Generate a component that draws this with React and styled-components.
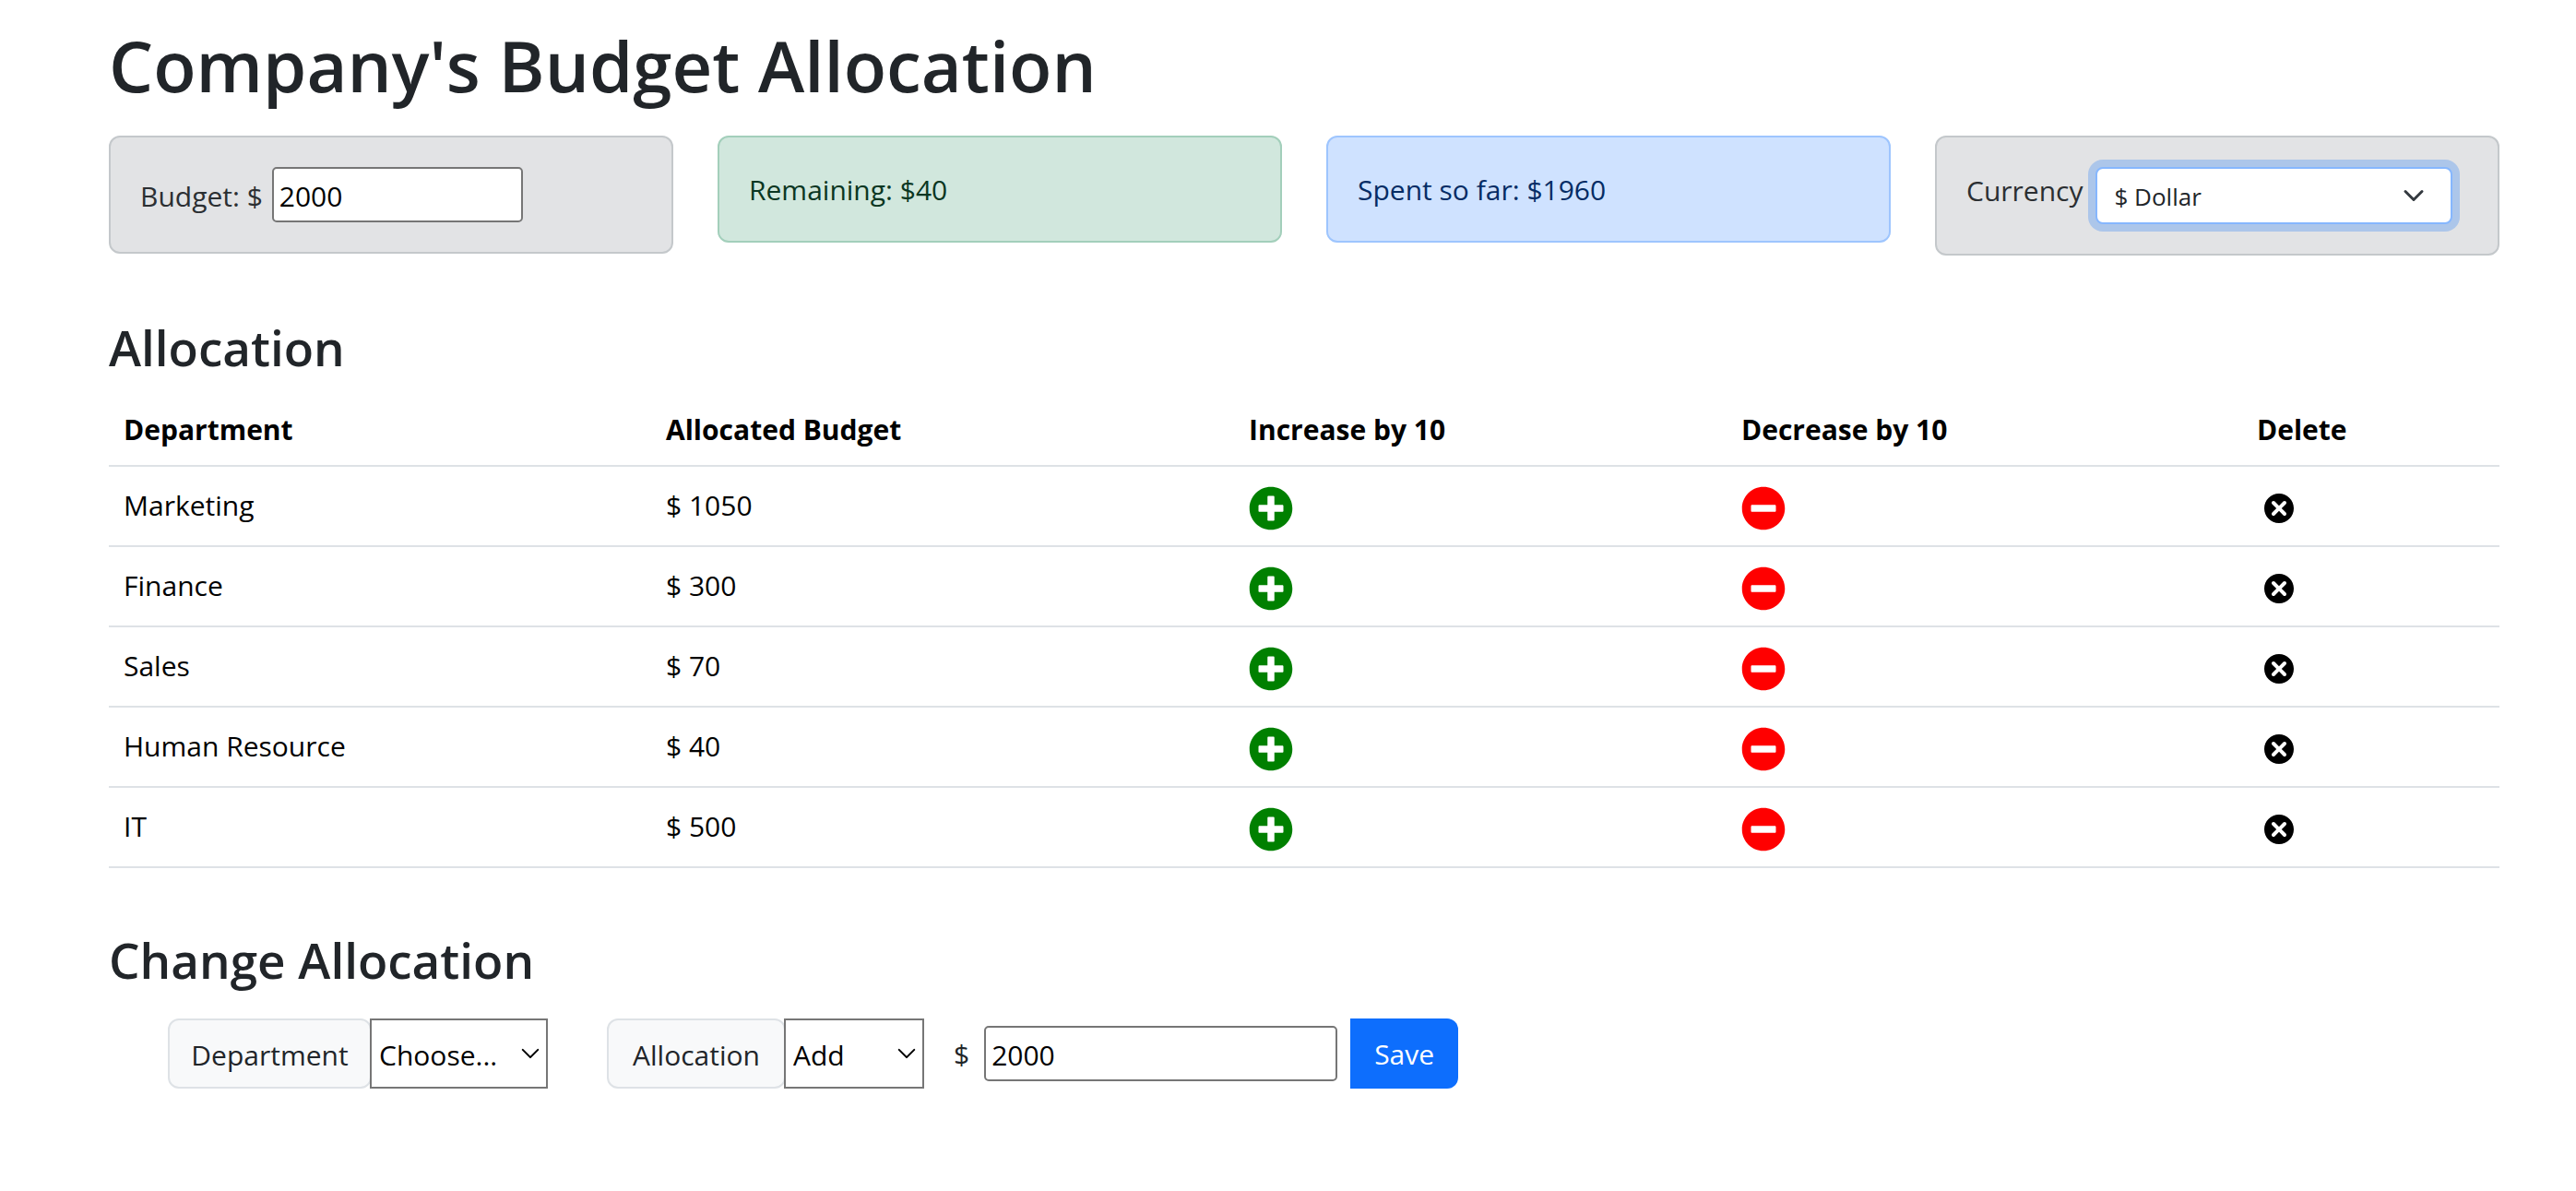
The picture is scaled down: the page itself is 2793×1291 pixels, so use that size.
import React, { useState } from "react";
import styled, { createGlobalStyle } from "styled-components";
import { FaPlusCircle, FaMinusCircle } from "react-icons/fa";
import { TiDelete } from "react-icons/ti";

const chevron = (color, width) =>
  `url("data:image/svg+xml,%3csvg xmlns='http://www.w3.org/2000/svg' viewBox='0 0 16 16'%3e%3cpath fill='none' stroke='%23${color}' stroke-linecap='round' stroke-linejoin='round' stroke-width='${width}' d='m2 5 6 6 6-6'/%3e%3c/svg%3e")`;

const GlobalStyle = createGlobalStyle`
  *, *::before, *::after { box-sizing: border-box; }
  body {
    margin: 0;
    background: #fff;
    color: #212529;
    font-family: "Open Sans", "Noto Sans", sans-serif;
    font-size: 30px;
    line-height: 48px;
  }
  input, select, button { font: inherit; margin: 0; }
`;

const Page = styled.main`
  padding: 23px 83px 0 118px;
`;

const Title = styled.h1`
  margin: 0 0 28px;
  font-size: 76px;
  font-weight: 600;
  line-height: 96px;
`;

const SectionTitle = styled.h2`
  margin: 66px 0 ${(p) => p.$space}px;
  font-size: 53px;
  font-weight: 600;
  line-height: 68px;
`;

const Summary = styled.section`
  display: grid;
  grid-template-columns: repeat(4, 1fr);
  gap: 48px;
  align-items: start;
`;

const tones = {
  secondary: { bg: "#e2e3e5", border: "#c4c8cb", text: "#2b2f32" },
  success: { bg: "#d1e7dd", border: "#a3cfbb", text: "#0a3622" },
  primary: { bg: "#cfe2ff", border: "#9ec5fe", text: "#052c65" },
};

const Card = styled.div`
  display: flex;
  align-items: ${(p) => p.$align || "flex-start"};
  gap: ${(p) => p.$gap || 0}px;
  padding: 32px;
  border: 2px solid ${(p) => tones[p.$tone].border};
  border-radius: 12px;
  background: ${(p) => tones[p.$tone].bg};
  color: ${(p) => tones[p.$tone].text};
`;

const CardText = styled.p`
  margin: 0;
  padding-top: 2px;
  line-height: 46px;
`;

const CardLabel = styled.label`
  padding-top: 2px;
  white-space: nowrap;
`;

const NumberInput = styled.input`
  width: ${(p) => p.$width}px;
  height: 60px;
  padding: 2px 6px 0;
  border: 2px solid #767676;
  border-radius: 5px;
  background: #fff;
  color: #000;
  appearance: textfield;
  &::-webkit-inner-spin-button { display: none; }
`;

const CurrencySelect = styled.select`
  flex: none;
  width: 71%;
  height: 62px;
  padding: 2px 72px 0 18px;
  border: 2px solid #86b7fe;
  border-radius: 8px;
  outline: 0;
  appearance: none;
  background: #fff ${chevron("343a40", 2)} no-repeat right 26px center / 28px 24px;
  box-shadow: 0 0 0 8px rgba(13, 110, 253, 0.25);
  color: #212529;
  font-size: 26px;
`;

const Table = styled.table`
  width: 100%;
  table-layout: fixed;
  border-spacing: 0;
  color: #000;
`;

const HeadCell = styled.th`
  height: 82px;
  padding: 18px 16px 14px;
  border-bottom: 2px solid #dee2e6;
  font-weight: 700;
  text-align: left;
`;

const Cell = styled.td`
  height: 87px;
  padding: ${(p) => (p.$icon ? "21px" : "18px")} 16px 0;
  border-bottom: 2px solid #dee2e6;
  vertical-align: top;
`;

const IconButton = styled.button`
  display: block;
  padding: 0;
  border: 0;
  background: none;
  color: ${(p) => p.$color};
  cursor: pointer;
  svg { display: block; width: 48px; height: 48px; }
`;

const Form = styled.form`
  display: flex;
  align-items: center;
  padding-left: 64px;
`;

const Group = styled.div`
  display: flex;
  margin-right: ${(p) => p.$space}px;
`;

const GroupLabel = styled.label`
  width: ${(p) => p.$width}px;
  height: 76px;
  padding: 14px 0 10px;
  border: 2px solid #dee2e6;
  border-radius: 12px;
  background: #f8f9fa;
  text-align: center;
`;

const GroupSelect = styled.select`
  width: ${(p) => p.$width}px;
  height: 76px;
  margin-left: -2px;
  padding: 4px 40px 0 8px;
  border: 2px solid #767676;
  border-radius: 0;
  appearance: none;
  background: #fff ${chevron("000", "1.5")} no-repeat right 6px center / 22px 22px;
  color: #000;
`;

const AmountLabel = styled.label`
  margin-right: 16px;
  padding-top: 2px;
`;

const SaveButton = styled.button`
  height: 76px;
  margin-left: 14px;
  padding: 2px 26px 0;
  border: 0;
  border-radius: 0 12px 12px 0;
  background: #0d6efd;
  color: #fff;
  cursor: pointer;
`;

const initial = [
  { name: "Marketing", cost: 1050 },
  { name: "Finance", cost: 300 },
  { name: "Sales", cost: 70 },
  { name: "Human Resource", cost: 40 },
  { name: "IT", cost: 500 },
];

const columnShares = [588, 632, 534, 559, 279];
const shareTotal = columnShares.reduce((a, b) => a + b, 0);

export default function App() {
  const [rows, setRows] = useState(initial);
  const [budget, setBudget] = useState(2000);
  const [currency, setCurrency] = useState("$");
  const [department, setDepartment] = useState("");
  const [action, setAction] = useState("Add");
  const [amount, setAmount] = useState(2000);

  const spent = rows.reduce((total, row) => total + row.cost, 0);
  const change = (name, delta) =>
    setRows(rows.map((r) => (r.name === name ? { ...r, cost: Math.max(0, r.cost + delta) } : r)));
  const save = (event) => {
    event.preventDefault();
    change(department, action === "Add" ? Number(amount) : -Number(amount));
  };

  return (
    <>
      <GlobalStyle />
      <Page>
        <Title>Company's Budget Allocation</Title>
        <Summary>
          <Card $tone="secondary" $align="baseline" $gap={10}>
            <CardLabel htmlFor="budget">Budget: {currency}</CardLabel>
            <NumberInput
              id="budget"
              type="number"
              $width={272}
              value={budget}
              onChange={(e) => setBudget(e.target.value)}
            />
          </Card>
          <Card $tone="success">
            <CardText>Remaining: {currency}{budget - spent}</CardText>
          </Card>
          <Card $tone="primary">
            <CardText>Spent so far: {currency}{spent}</CardText>
          </Card>
          <Card $tone="secondary" $gap={14}>
            <CardLabel htmlFor="currency">Currency</CardLabel>
            <CurrencySelect id="currency" value={currency} onChange={(e) => setCurrency(e.target.value)}>
              <option value="$">$ Dollar</option>
              <option value="£">£ Pound</option>
              <option value="€">€ Euro</option>
              <option value="₹">₹ Rupee</option>
            </CurrencySelect>
          </Card>
        </Summary>

        <SectionTitle $space={13}>Allocation</SectionTitle>
        <Table>
          <colgroup>
            {columnShares.map((share, i) => (
              <col key={i} style={{ width: `${(share / shareTotal) * 100}%` }} />
            ))}
          </colgroup>
          <thead>
            <tr>
              <HeadCell>Department</HeadCell>
              <HeadCell>Allocated Budget</HeadCell>
              <HeadCell>Increase by 10</HeadCell>
              <HeadCell>Decrease by 10</HeadCell>
              <HeadCell>Delete</HeadCell>
            </tr>
          </thead>
          <tbody>
            {rows.map((row) => (
              <tr key={row.name}>
                <Cell>{row.name}</Cell>
                <Cell>{currency} {row.cost}</Cell>
                <Cell $icon>
                  <IconButton $color="green" aria-label={`Increase ${row.name}`} onClick={() => change(row.name, 10)}>
                    <FaPlusCircle />
                  </IconButton>
                </Cell>
                <Cell $icon>
                  <IconButton $color="red" aria-label={`Decrease ${row.name}`} onClick={() => change(row.name, -10)}>
                    <FaMinusCircle />
                  </IconButton>
                </Cell>
                <Cell $icon>
                  <IconButton $color="#000" aria-label={`Delete ${row.name}`} onClick={() => change(row.name, -row.cost)}>
                    <TiDelete />
                  </IconButton>
                </Cell>
              </tr>
            ))}
          </tbody>
        </Table>

        <SectionTitle $space={29}>Change Allocation</SectionTitle>
        <Form onSubmit={save}>
          <Group $space={64}>
            <GroupLabel htmlFor="department" $width={221}>Department</GroupLabel>
            <GroupSelect id="department" $width={193} value={department} onChange={(e) => setDepartment(e.target.value)}>
              <option value="">Choose...</option>
              {rows.map((row) => (
                <option key={row.name}>{row.name}</option>
              ))}
            </GroupSelect>
          </Group>
          <Group $space={32}>
            <GroupLabel htmlFor="action" $width={194}>Allocation</GroupLabel>
            <GroupSelect id="action" $width={152} value={action} onChange={(e) => setAction(e.target.value)}>
              <option>Add</option>
              <option>Reduce</option>
            </GroupSelect>
          </Group>
          <AmountLabel htmlFor="amount">{currency}</AmountLabel>
          <NumberInput
            id="amount"
            type="number"
            $width={383}
            value={amount}
            onChange={(e) => setAmount(e.target.value)}
          />
          <SaveButton type="submit">Save</SaveButton>
        </Form>
      </Page>
    </>
  );
}
